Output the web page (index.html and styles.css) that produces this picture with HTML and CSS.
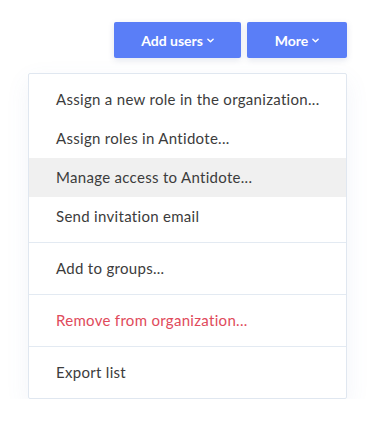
FILE: index.html
```html
<!DOCTYPE html>
<html lang="en">
<head>
    <meta charset="UTF-8">
    <meta name="viewport" content="width=device-width, initial-scale=1.0">
    <title>Users</title>
    <link rel="stylesheet" href="styles.css">
</head>
<body>
    <div class="toolbar">
        <button class="btn btnAdd">Add users <svg class="chev" viewBox="0 0 8 5"><path d="M1 1l3 3 3-3"/></svg></button>
        <button class="btn btnMore">More <svg class="chev" viewBox="0 0 8 5"><path d="M1 1l3 3 3-3"/></svg></button>
    </div>

    <div class="menu">
        <ul class="menuGroup">
            <li class="menuItem">Assign a new role in the organization...</li>
            <li class="menuItem">Assign roles in Antidote...</li>
            <li class="menuItem active">Manage access to Antidote...</li>
            <li class="menuItem">Send invitation email</li>
        </ul>
        <ul class="menuGroup">
            <li class="menuItem">Add to groups...</li>
        </ul>
        <ul class="menuGroup">
            <li class="menuItem danger">Remove from organization...</li>
        </ul>
        <ul class="menuGroup">
            <li class="menuItem">Export list</li>
        </ul>
    </div>
</body>
</html>
```

FILE: styles.css
```css
* {
  box-sizing: border-box;
  margin: 0;
  padding: 0;
  list-style: none;
}

body {
  background-color: #FFFFFF;
  font-family: "Lato", "Open Sans", sans-serif;
  color: #3c3c3c;
  -webkit-font-smoothing: antialiased;
}

.toolbar {
  display: flex;
  justify-content: flex-end;
  gap: 6px;
  padding: 22px 25px 0 0;
}

.btn {
  height: 36px;
  border: none;
  border-radius: 2px;
  background-color: #5a7ef7;
  color: #FFFFFF;
  font-family: inherit;
  font-size: 14px;
  font-weight: bold;
  display: flex;
  align-items: center;
  justify-content: center;
  gap: 4px;
  box-shadow: 0 2px 6px rgba(60, 80, 140, 0.15);
}

.btnAdd {
  width: 127px;
}

.btnMore {
  width: 100px;
}

.chev {
  width: 7px;
  height: 5px;
  fill: none;
  stroke: #FFFFFF;
  stroke-width: 1.6;
  stroke-linecap: round;
  stroke-linejoin: round;
}

.menu {
  width: 319px;
  margin: 15px 0 0 28px;
  border: 1px solid #e0e7f0;
  border-radius: 2px;
  background-color: #FFFFFF;
  box-shadow: 0 8px 24px rgba(90, 120, 180, 0.08);
}

.menuGroup {
  padding: 6px 0;
  border-bottom: 1px solid #e3eaf2;
}

.menuGroup:last-child {
  border-bottom: none;
}

.menuItem {
  height: 39px;
  line-height: 39px;
  padding-left: 27px;
  font-size: 15px;
  letter-spacing: 0.3px;
  white-space: nowrap;
}

.menuItem.active {
  background-color: #f0f0f0;
}

.menuItem.danger {
  color: #e04a5b;
}
```
